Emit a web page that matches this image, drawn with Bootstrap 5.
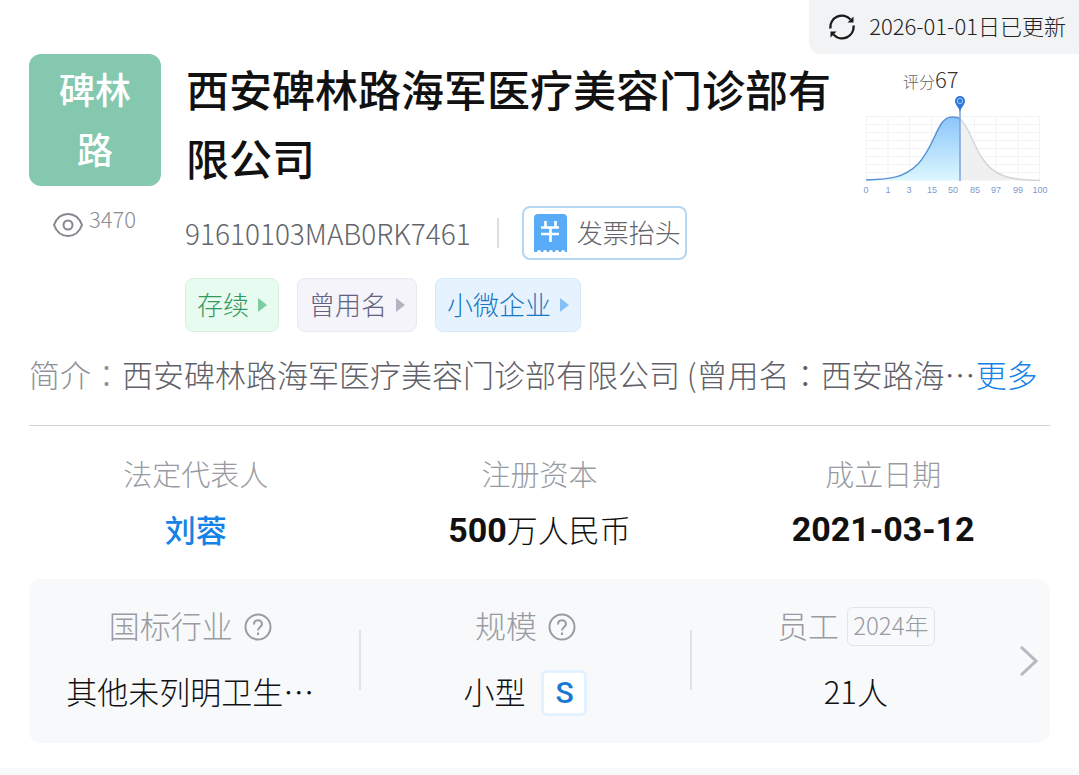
<!DOCTYPE html>
<html lang="zh-CN">
<head>
<meta charset="utf-8">
<meta name="viewport" content="width=device-width, initial-scale=1">
<title>西安碑林路海军医疗美容门诊部有限公司</title>
<link href="https://cdn.jsdelivr.net/npm/bootstrap@5.3.0/dist/css/bootstrap.min.css" rel="stylesheet">
<style>
  body { font-family: "Noto Sans CJK SC", sans-serif; font-weight: 300; color: #111; background: #fff; }
  a { text-decoration: none; color: #1482e6; }
  .page-x { padding-left: 29px; padding-right: 29px; }
  .label-text { padding-bottom: 4px; }
  .updated { background: #f2f3f5; border-bottom-left-radius: 12px; height: 54px; padding: 0 13px 0 20px; gap: 14px; font-size: 22px; color: #222; }
  .profile { gap: 24px; }
  .side { width: 132px; }
  .avatar { height: 132px; border-radius: 12px; background: #84c8b0; color: #fff; font-size: 36px; line-height: 60px; font-weight: 500; padding: 4px 24px; }
  .views { margin-top: 18px; padding-left: 24px; gap: 6px; font-size: 22px; line-height: 28px; color: #8b8d94; }
  .views svg { margin-top: 9px; }
  .company { font-size: 43px; line-height: 69px; font-weight: 500; padding-left: 1px; }
  .code-row { margin-top: 14px; }
  .code { font-size: 28px; color: #63656b; }
  .rule-v { width: 2px; height: 30px; background: #dddfe2; margin: 0 23px 0 26px; }
  .invoice { height: 54px; border: 2px solid #b5d7f2; border-radius: 8px; padding: 0 4px 0 10px; gap: 10px; background: #fff; font-size: 26px; font-weight: 300; color: #63656b; }
  .tags { margin-top: 18px; gap: 18px; }
  .tag { height: 54px; border-radius: 8px; border: 1px solid; padding: 0 11px; gap: 8px; font-size: 26px; font-weight: 300; }
  .tag-green { background: #e8fbf0; border-color: #d3f3e0; color: #32995d; }
  .tag-gray { background: #f4f4fa; border-color: #e8e8f0; color: #62627c; }
  .tag-blue { background: #e6f3fe; border-color: #d4e9fa; color: #1878c4; }
  .score { width: 190px; padding-top: 10px; font-size: 22px; line-height: 28px; color: #333; }
  .score-line { padding-left: 43px; }
  .score small { font-size: 16px; color: #666; }
  .score svg { display: block; width: 100%; }
  .intro { margin-top: 22px; font-size: 31px; line-height: 40px; color: #5f6168; }
  .intro b { font-weight: 300; color: #909299; }
  .colon { font-family: "Noto Sans CJK TC", sans-serif; }
  .divide { margin: 31px 29px 0; border-top: 1px solid #d3d5d9; opacity: 1; }
  .facts { margin: 27px 24px 0; }
  .term { font-size: 29px; line-height: 40px; font-weight: 300; color: #999ba2; }
  .fact { font-size: 31px; line-height: 48px; margin: 12px 0 0; }
  .num { font-family: Roboto, sans-serif; font-weight: 700; font-size: 34px; }
  .person { font-weight: 500; }
  .panel { margin: 25px 29px 0; height: 164px; border-radius: 12px; background: #f8f9fb; }
  .panel dl { padding-bottom: 3px; }
  .panel .term, .panel .fact { font-size: 31px; height: 48px; line-height: 48px; }
  .panel .fact { margin-top: 18px; }
  .panel .split { border-left: 2px solid #e1e2e6; height: 60px; }
  .more { width: 30px; }
  .help { width: 28px; height: 28px; }
  .help-gap { gap: 11px; }
  .year { font-size: 24px; height: 39px; line-height: 33px; border: 1px solid #e3e4e8; border-radius: 6px; padding: 0 5px; }
  .size { width: 46px; height: 46px; border: 3px solid #e4f1fe; border-radius: 6px; background: #fff; color: #1878d2; font: 500 30px/40px Roboto, sans-serif; }
  .strip { margin-top: 25px; height: 7px; background: #f8f9fb; }
</style>
</head>
<body>
<header class="d-flex justify-content-end">
  <div class="updated d-flex align-items-center">
    <svg width="26" height="26" viewBox="0 0 26 26" fill="none" stroke="#1a1a1a" stroke-width="2.4" aria-hidden="true">
      <path d="M1.500 14.500A11.500 11.500 0 0 1 21.500 5.500M24.500 11.500A11.500 11.500 0 0 1 4.500 20.500"/>
      <path d="M24.500 2.500V8.500H18.500ZM1.500 23.500V17.500H7.500Z" fill="#1a1a1a" stroke="none"/>
    </svg>
    <span class="label-text">2026-01-01日已更新</span>
  </div>
</header>
<main>
  <section class="profile page-x d-flex align-items-start">
    <div class="side flex-shrink-0">
      <div class="avatar text-center">碑林路</div>
      <div class="views d-flex align-items-start">
        <svg width="30" height="24" viewBox="0 0 30 24" fill="none" stroke="#85878e" stroke-width="2" aria-hidden="true">
          <path d="M1 12C4 4 10 1 15 1S26 4 29 12C26 20 20 23 15 23S4 20 1 12Z"/><circle cx="15" cy="12" r="4.500"/>
        </svg>
        <span>3470</span>
      </div>
    </div>
    <div class="flex-grow-1">
      <h1 class="company mb-0">西安碑林路海军医疗美容门诊部有限公司</h1>
      <div class="code-row d-flex align-items-center">
        <span class="code">91610103MAB0RK7461</span>
        <span class="rule-v"></span>
        <button type="button" class="invoice d-flex align-items-center">
          <svg width="33" height="40" viewBox="0 0 33 40" aria-hidden="true">
            <path fill="#58abf7" d="M4 1H29Q33 1 33 5V39H31A2 2 0 0 0 27 39H25A2 2 0 0 0 21 39H19A2 2 0 0 0 15 39H13A2 2 0 0 0 9 39H7A2 2 0 0 0 3 39H0V5Q0 1 4 1Z"/>
            <path d="M11.500 8V15M21.500 8V15M7 14.500H25M7 21H25M16.500 14.500V29" stroke="#fff" stroke-width="2.600" fill="none"/>
          </svg>
          <span class="label-text">发票抬头</span>
        </button>
      </div>
      <div class="tags d-flex">
        <button type="button" class="tag tag-green d-flex align-items-center"><span class="label-text">存续</span><svg width="10" height="16" viewBox="0 0 10 16" aria-hidden="true"><path d="M1 1L10 8L1 15Z" fill="#7fcca3"/></svg></button>
        <button type="button" class="tag tag-gray d-flex align-items-center"><span class="label-text">曾用名</span><svg width="10" height="16" viewBox="0 0 10 16" aria-hidden="true"><path d="M1 1L10 8L1 15Z" fill="#b3b3c2"/></svg></button>
        <button type="button" class="tag tag-blue d-flex align-items-center"><span class="label-text">小微企业</span><svg width="10" height="16" viewBox="0 0 10 16" aria-hidden="true"><path d="M1 1L10 8L1 15Z" fill="#84c0f5"/></svg></button>
      </div>
    </div>
    <div class="score flex-shrink-0">
      <div class="score-line"><small>评分</small>67</div>
      <svg viewBox="0 0 190 102" role="img" aria-label="评分分布">
        <defs><linearGradient id="fill" x1="0" y1="0" x2="0" y2="1"><stop offset="0" stop-color="#8cc6fa"/><stop offset="1" stop-color="#dcf7ff"/></linearGradient></defs>
        <path d="M6 21.500H180M6 29.500H180M6 37.500H180M6 45.500H180M6 53.500H180M6 61.500H180M6 69.500H180M6 77.500H180M6.500 21V86M28 21V86M49.500 21V86M71.500 21V86M93 21V86M114.500 21V86M136 21V86M158 21V86M179.500 21V86" stroke="#f3f3f5" fill="none"/>
        <path d="M100 24C109 31 112 48 122 63C134 82 151 85 180 85.500H100Z" fill="#f1f0f1"/>
        <path d="M6 85C31 84 44 83 58 69C76 50 77 22 92 22C95 22 98 22 100 24V85.500H6Z" fill="url(#fill)"/>
        <path d="M100 24C109 31 112 48 122 63C134 82 151 85 180 85.500" fill="none" stroke="#d5d5d9" stroke-width="1.500"/>
        <path d="M6 85C31 84 44 83 58 69C76 50 77 22 92 22C95 22 98 22 100 24" fill="none" stroke="#5b92d6" stroke-width="1.500"/>
        <path d="M100 14V86" stroke="#7ba0e2" stroke-width="1.500"/>
        <path d="M100 17C99 12 95 10 95 6A5 5 0 0 1 105 6C105 10 101 12 100 17Z" fill="#3478d8"/>
        <circle cx="100" cy="6" r="2.600" fill="#3478d8" stroke="#9bccff"/>
        <g font-family="Liberation Sans, sans-serif" font-size="9" font-weight="400" fill="#7c9acc" text-anchor="middle">
          <text x="6" y="98">0</text><text x="28" y="98">1</text><text x="49" y="98">3</text><text x="72" y="98">15</text><text x="93" y="98">50</text><text x="115" y="98">85</text><text x="136" y="98">97</text><text x="158" y="98">99</text><text x="180" y="98">100</text>
        </g>
      </svg>
    </div>
  </section>

  <p class="intro page-x mb-0 text-nowrap"><b>简介<span class="colon" lang="zh-Hant">：</span></b>西安碑林路海军医疗美容门诊部有限公司 (曾用名<span class="colon" lang="zh-Hant">：</span>西安路海…<a href="#">更多</a></p>

  <hr class="divide">
  <dl class="facts mb-0 row gx-0 text-center">
    <div class="col-4"><dt class="term">法定代表人</dt><dd class="fact"><a class="person" href="#">刘蓉</a></dd></div>
    <div class="col-4"><dt class="term">注册资本</dt><dd class="fact"><span class="num">500</span>万人民币</dd></div>
    <div class="col-4"><dt class="term">成立日期</dt><dd class="fact num">2021-03-12</dd></div>
  </dl>

  <div class="panel d-flex align-items-center text-center">
    <dl class="row gx-0 flex-grow-1 mb-0 align-items-center">
      <div class="col-4 pe-2">
        <dt class="term d-flex justify-content-center align-items-center help-gap"><span class="label-text">国标行业</span>
          <svg class="help" viewBox="0 0 28 28" fill="none" stroke="#999ba2" stroke-width="2" role="img" aria-label="说明"><circle cx="14" cy="14" r="12.500"/><path d="M10 11.500C10 6 18 6 18 11C18 14 14 14 14 17.500M14 19.500V22"/></svg>
        </dt>
        <dd class="fact d-flex justify-content-center align-items-center"><span class="label-text">其他未列明卫生…</span></dd>
      </div>
      <div class="col-4 d-flex align-items-center">
        <span class="split"></span>
        <div class="flex-grow-1">
          <dt class="term d-flex justify-content-center align-items-center help-gap"><span class="label-text">规模</span>
            <svg class="help" viewBox="0 0 28 28" fill="none" stroke="#999ba2" stroke-width="2" role="img" aria-label="说明"><circle cx="14" cy="14" r="12.500"/><path d="M10 11.500C10 6 18 6 18 11C18 14 14 14 14 17.500M14 19.500V22"/></svg>
          </dt>
          <dd class="fact d-flex justify-content-center align-items-center gap-3"><span class="label-text">小型</span><span class="size">S</span></dd>
        </div>
      </div>
      <div class="col-4 d-flex align-items-center">
        <span class="split"></span>
        <div class="flex-grow-1">
          <dt class="term d-flex justify-content-center align-items-center gap-2"><span class="label-text">员工</span><span class="year">2024年</span></dt>
          <dd class="fact d-flex justify-content-center align-items-center"><span class="label-text">21人</span></dd>
        </div>
      </div>
    </dl>
    <a class="more" href="#" aria-label="查看更多"><svg class="d-block" width="18" height="30" viewBox="0 0 18 30" fill="none" stroke="#b6b8c2" stroke-width="3"><path d="M1 1L16 15L1 29"/></svg></a>
  </div>
  <div class="strip"></div>
</main>
<script src="https://cdn.jsdelivr.net/npm/bootstrap@5.3.0/dist/js/bootstrap.bundle.min.js"></script>
</body>
</html>
